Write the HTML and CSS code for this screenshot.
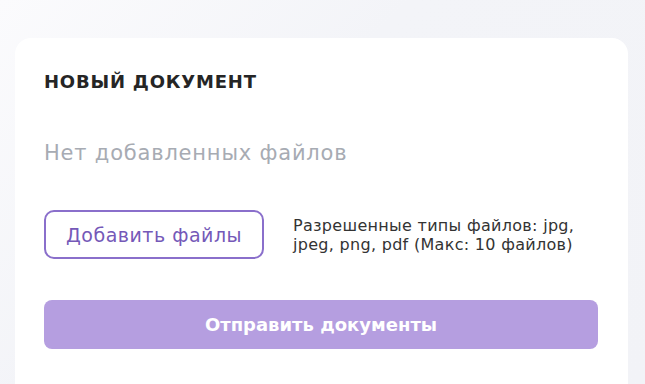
FILE: index.html
```html
<!DOCTYPE html>
<html lang="ru">
<head>
<meta charset="utf-8">
<link rel="stylesheet" href="styles.css">
</head>
<body>
<div class="page">
  <section class="card">
    <h2 class="title">НОВЫЙ ДОКУМЕНТ</h2>
    <p class="empty">Нет добавленных файлов</p>
    <div class="upload-row">
      <button class="btn-add" type="button">Добавить файлы</button>
      <p class="hint">Разрешенные типы файлов: jpg,<br>jpeg, png, pdf (Макс: 10 файлов)</p>
    </div>
    <button class="btn-submit" type="button">Отправить документы</button>
  </section>
</div>
</body>
</html>
```
FILE: styles.css
```css
* { box-sizing: border-box; }
html, body { margin: 0; padding: 0; }
body {
  width: 645px;
  height: 384px;
  overflow: hidden;
  background: linear-gradient(135deg, #fbfbfd 0%, #f3f4f8 40%, #f2f3f7 100%);
  font-family: "DejaVu Sans", "Noto Sans", sans-serif;
}
.page {
  padding: 38px 17px 0 15px;
}
.card {
  background: #ffffff;
  border-radius: 16px 16px 0 0;
  padding: 32px 30px 40px 29px;
  min-height: 360px;
}
.title {
  margin: 0;
  font-size: 18px;
  line-height: 24px;
  font-weight: 700;
  color: #252525;
  letter-spacing: 0.8px;
}
.empty {
  margin: 45px 0 0;
  font-size: 21px;
  line-height: 28px;
  color: #a7abb3;
  letter-spacing: 0.8px;
}
.upload-row {
  display: flex;
  align-items: center;
  gap: 29px;
  margin-top: 43px;
}
.btn-add {
  width: 220px;
  height: 49px;
  border: 2px solid #8a6fcb;
  border-radius: 10px;
  background: #ffffff;
  color: #7559b8;
  font-family: inherit;
  font-size: 19px;
  letter-spacing: 0.5px;
  padding: 0;
}
.hint {
  margin: 0;
  font-size: 16px;
  line-height: 19px;
  color: #333333;
  letter-spacing: 0.3px;
}
.btn-submit {
  display: block;
  width: 100%;
  height: 49px;
  margin-top: 41px;
  border: none;
  border-radius: 8px;
  background: #b59ee0;
  color: #ffffff;
  font-family: inherit;
  font-size: 18px;
  font-weight: 700;
  padding: 0;
}
```
